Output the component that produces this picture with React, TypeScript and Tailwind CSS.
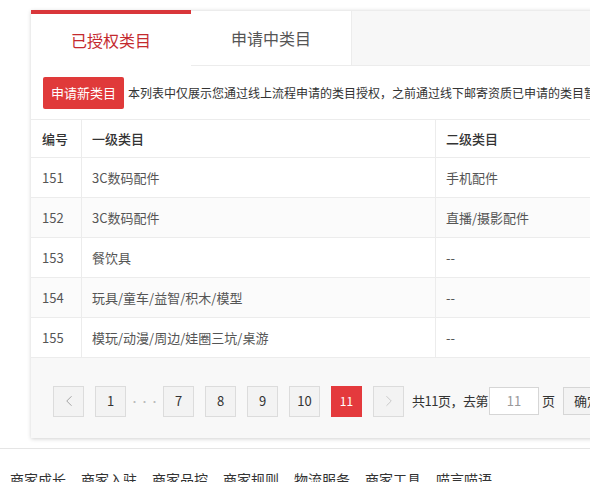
import { ChevronLeft, ChevronRight } from 'lucide-react'

const rows = [
  { id: '151', first: '3C数码配件', second: '手机配件' },
  { id: '152', first: '3C数码配件', second: '直播/摄影配件' },
  { id: '153', first: '餐饮具', second: '--' },
  { id: '154', first: '玩具/童车/益智/积木/模型', second: '--' },
  { id: '155', first: '模玩/动漫/周边/娃圈三坑/桌游', second: '--' },
]

const footerLinks = ['商家成长', '商家入驻', '商家品控', '商家规则', '物流服务', '商家工具', '喵言喵语']

function PageBtn({ children, active }: { children: React.ReactNode; active?: boolean }) {
  return (
    <div
      className={
        active
          ? 'w-[31px] h-[31px] flex items-center justify-center bg-[#e43a3d] text-white text-[12px] border border-[#e43a3d]'
          : 'w-[31px] h-[31px] flex items-center justify-center bg-[#f3f3f3] text-[#333] text-[13px] border border-[#dcdcdc]'
      }
    >
      {children}
    </div>
  )
}

export default function App() {
  return (
    <div
      className="w-[590px] h-[482px] overflow-hidden bg-white relative"
      style={{ fontFamily: '"Microsoft YaHei", "Noto Sans CJK SC", "Liberation Sans", sans-serif' }}
    >
      <div className="pt-[10px] pl-[31px]">
        <div className="w-[700px] bg-white shadow-[0_1px_4px_rgba(0,0,0,0.18)]">
          {/* tabs */}
          <div className="flex h-[56px] bg-[#f7f7f7]">
            <div className="w-[160px] bg-white border-t-4 border-[#d9363a] flex items-center justify-center text-[16px] text-[#c42a2e]">
              已授权类目
            </div>
            <div className="w-[161px] bg-white border-t border-[#ececec] border-b border-r flex items-center justify-center text-[16px] text-[#555]">
              申请中类目
            </div>
            <div className="flex-1 border-t border-b border-[#ececec]" />
          </div>

          {/* notice */}
          <div className="flex items-center h-[54px] px-[12px] border-b border-[#ececec]">
            <div className="h-[32px] px-[8px] flex items-center bg-[#e03a3a] rounded-[2px] text-white text-[13px]">
              申请新类目
            </div>
            <div className="ml-[4px] text-[12px] text-[#333] whitespace-nowrap">
              本列表中仅展示您通过线上流程申请的类目授权，之前通过线下邮寄资质已申请的类目暂不展示
            </div>
          </div>

          {/* table */}
          <div className="text-[13px]">
            <div className="flex h-[38px] items-center border-b border-[#ececec] text-[#333] font-medium">
              <div className="w-[51px] pl-[11px] h-full flex items-center border-r border-[#ececec]">编号</div>
              <div className="w-[354px] pl-[10px] h-full flex items-center border-r border-[#ececec]">一级类目</div>
              <div className="flex-1 pl-[10px]">二级类目</div>
            </div>
            {rows.map((r, i) => (
              <div
                key={r.id}
                className={`flex h-[40px] items-center border-b border-[#ececec] text-[#555] ${i % 2 === 1 ? 'bg-[#fbfbfb]' : 'bg-white'}`}
              >
                <div className="w-[51px] pl-[11px] h-full flex items-center border-r border-[#ececec]">{r.id}</div>
                <div className="w-[354px] pl-[10px] h-full flex items-center border-r border-[#ececec]">{r.first}</div>
                <div className="flex-1 pl-[10px]">{r.second}</div>
              </div>
            ))}
          </div>

          {/* pagination */}
          <div className="h-[80px] bg-[#f8f8f8] flex items-center pl-[22px] pt-[6px]">
            <PageBtn>
              <ChevronLeft size={18} strokeWidth={1} className="text-[#888]" />
            </PageBtn>
            <div className="ml-[11px]">
              <PageBtn>1</PageBtn>
            </div>
            <div className="w-[37px] text-center text-[#bbb] text-[10px]">···</div>
            <div className="flex gap-[11px]">
              <PageBtn>7</PageBtn>
              <PageBtn>8</PageBtn>
              <PageBtn>9</PageBtn>
              <PageBtn>10</PageBtn>
              <PageBtn active>11</PageBtn>
              <PageBtn>
                <ChevronRight size={18} strokeWidth={1} className="text-[#bbb]" />
              </PageBtn>
            </div>
            <span className="ml-[8px] text-[13px] text-[#333] tracking-[-0.5px]">共11页，去第</span>
            <div className="ml-[1px] w-[50px] h-[28px] border border-[#d6d6d6] bg-white flex items-center justify-center text-[13px] text-[#999]">
              11
            </div>
            <span className="ml-[3px] text-[13px] text-[#333]">页</span>
            <div className="ml-[8px] h-[28px] px-[10px] border border-[#d6d6d6] bg-[#f3f3f3] flex items-center text-[13px] text-[#333]">
              确定
            </div>
          </div>
        </div>
      </div>

      {/* footer */}
      <div className="mt-[10px] border-t border-[#e5e5e5] pt-[20px] pl-[10px] flex gap-[15px] text-[14px] text-[#333] whitespace-nowrap">
        {footerLinks.map((l) => (
          <span key={l}>{l}</span>
        ))}
      </div>
    </div>
  )
}
